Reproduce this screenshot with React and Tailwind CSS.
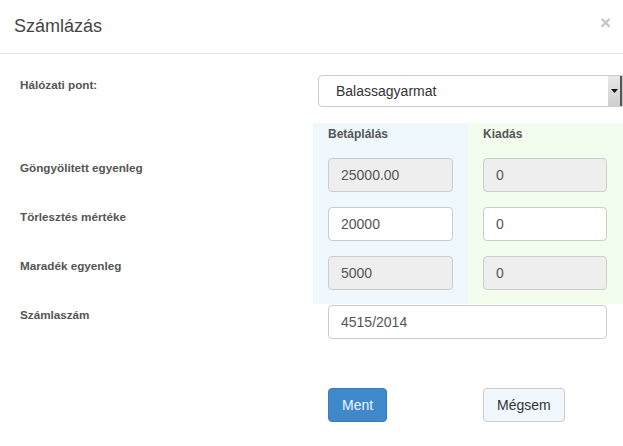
const Field = ({ value, readOnly, className = '' }) => (
  <div
    className={`h-[34px] flex items-center px-[12px] border border-[#ccc] rounded-[4px] text-[14px] text-[#555] ${
      readOnly ? 'bg-[#eee]' : 'bg-white'
    } ${className}`}
  >
    {value}
  </div>
);

const Label = ({ children }) => (
  <div className="h-[34px] pt-[3px] text-[11.7px] leading-[14px] font-bold text-[#555]">{children}</div>
);

const App = () => {
  return (
    <div className="w-[623px] h-[446px] bg-white overflow-hidden font-['Liberation_Sans',Arial,sans-serif]">
      {/* Header */}
      <div className="h-[54px] border-b border-[#e5e5e5] flex items-center justify-between pl-[14px] pr-[12px]">
        <h4 className="text-[18px] text-[#444] -mt-[1px]">Számlázás</h4>
        <span className="text-[19px] font-bold text-[#c4c4c4] leading-none -mt-[8px]">×</span>
      </div>

      {/* Hálózati pont */}
      <div className="flex pt-[21px]">
        <div className="w-[318px] pl-[20px] pt-[3px]">
          <div className="text-[11.7px] leading-[14px] font-bold text-[#555]">Hálózati pont:</div>
        </div>
        <div className="flex-1 h-[32px] flex items-center border border-[#ccc] rounded-l-[4px] bg-white overflow-hidden">
          <span className="flex-1 pl-[17px] text-[14px] text-[#333]">Balassagyarmat</span>
          <div className="w-[14px] h-full bg-gradient-to-b from-[#e8e8e8] to-[#cfcfcf] border-r-[2px] border-[#555] flex items-center justify-center">
            <svg width="7" height="4" viewBox="0 0 7 4">
              <path d="M0 0 L7 0 L3.5 4 Z" fill="#111" />
            </svg>
          </div>
        </div>
      </div>

      {/* Betáplálás / Kiadás */}
      <div className="flex mt-[16px]">
        <div className="w-[313px] pl-[20px] flex flex-col gap-[15px] pt-[35px]">
          <Label>Göngyölitett egyenleg</Label>
          <Label>Törlesztés mértéke</Label>
          <Label>Maradék egyenleg</Label>
        </div>
        <div className="w-[155px] bg-[#eef8fd] px-[15px] pb-[14px]">
          <div className="h-[35px] pt-[4px] text-[12px] leading-[14px] font-bold text-[#555]">Betáplálás</div>
          <div className="flex flex-col gap-[15px]">
            <Field value="25000.00" readOnly />
            <Field value="20000" />
            <Field value="5000" readOnly />
          </div>
        </div>
        <div className="w-[155px] bg-[#f2fdee] pl-[15px] pr-[16px] pb-[14px]">
          <div className="h-[35px] pt-[4px] text-[12px] leading-[14px] font-bold text-[#555]">Kiadás</div>
          <div className="flex flex-col gap-[15px]">
            <Field value="0" readOnly />
            <Field value="0" />
            <Field value="0" readOnly />
          </div>
        </div>
      </div>

      {/* Számlaszám */}
      <div className="flex mt-[1px]">
        <div className="w-[328px] pl-[20px]">
          <Label>Számlaszám</Label>
        </div>
        <Field value="4515/2014" className="w-[279px]" />
      </div>

      {/* Buttons */}
      <div className="flex mt-[49px]">
        <div className="w-[328px]" />
        <div className="w-[155px]">
          <button className="h-[34px] px-[13px] rounded-[4px] bg-[#3f88c9] border border-[#357ebd] text-[14px] text-[#eef6ff]">
            Ment
          </button>
        </div>
        <div>
          <button className="h-[34px] px-[13px] rounded-[4px] bg-[#f0f8fe] border border-[#ccc] text-[14px] text-[#333]">
            Mégsem
          </button>
        </div>
      </div>
    </div>
  );
};

export default App;
